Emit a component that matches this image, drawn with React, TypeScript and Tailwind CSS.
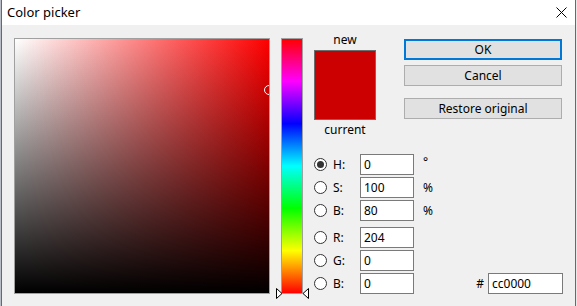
import React from "react";

const font = { fontFamily: '"Noto Sans", "Open Sans", sans-serif' };

type Row = { key: string; label: string; value: string; unit?: string; checked?: boolean };

const hsb: Row[] = [
  { key: "h", label: "H:", value: "0", unit: "°", checked: true },
  { key: "s", label: "S:", value: "100", unit: "%" },
  { key: "v", label: "B:", value: "80", unit: "%" },
];

const rgb: Row[] = [
  { key: "r", label: "R:", value: "204" },
  { key: "g", label: "G:", value: "0" },
  { key: "b", label: "B:", value: "0" },
];

function Radio({ checked }: { checked?: boolean }) {
  return (
    <span className="flex h-[13px] w-[13px] shrink-0 items-center justify-center rounded-full border border-[#333] bg-white">
      {checked ? <span className="h-[7px] w-[7px] rounded-full bg-[#333]" /> : null}
    </span>
  );
}

function Field({ row, last }: { row: Row; last?: boolean }) {
  return (
    <div className="flex h-[21px] items-center">
      <Radio checked={row.checked} />
      <span className="ml-[6px] w-[27px] text-[12px] text-black">{row.label}</span>
      <div className="flex h-[21px] w-[54px] items-center border border-[#7a7a7a] bg-white pl-[3px] text-[12px] text-black">
        {row.value}
      </div>
      {row.unit ? (
        <span className={`ml-[9px] text-[12px] text-black ${row.unit === "°" ? "-mt-[6px]" : ""}`}>
          {row.unit}
        </span>
      ) : null}
      {last ? (
        <>
          <div className="flex-1" />
          <span className="text-[12px] text-black">#</span>
          <div className="ml-[4px] flex h-[21px] w-[75px] items-center border border-[#7a7a7a] bg-white pl-[3px] text-[12px] text-black">
            cc0000
          </div>
        </>
      ) : null}
    </div>
  );
}

function Arrow({ dir }: { dir: "right" | "left" }) {
  return (
    <svg width="7" height="11" viewBox="0 0 7 11">
      <path
        d={dir === "right" ? "M0.5 0.5 L6 5.5 L0.5 10.5 Z" : "M6.5 0.5 L1 5.5 L6.5 10.5 Z"}
        fill="#fff"
        stroke="#000"
        strokeWidth="1"
      />
    </svg>
  );
}

export default function App() {
  return (
    <div className="flex h-[306px] w-[577px] overflow-hidden bg-[#f0f0f0]" style={font}>
      <div className="w-px bg-[#b9bec6]" />
      <div className="flex flex-1 flex-col border-x border-[#1c7bd2]">
        <div className="flex h-[25px] items-center justify-between bg-white pl-[5px] pr-[8px]">
          <span className="text-[13px] text-black">Color picker</span>
          <svg width="11" height="11" viewBox="0 0 11 11">
            <path d="M0.5 0.5 L10.5 10.5 M10.5 0.5 L0.5 10.5" stroke="#000" strokeWidth="1" />
          </svg>
        </div>

        <div className="flex flex-1 bg-[#f0f0f0] pl-[12px] pt-[13px]">
          {/* saturation / brightness square */}
          <div className="relative h-[256px] w-[256px] shrink-0 overflow-hidden border border-[#a0a0a0] bg-[linear-gradient(to_bottom,transparent,#000),linear-gradient(to_right,#fff,#f00)]">
            <span className="absolute left-[249px] top-[46px] h-[10px] w-[10px] rounded-full border border-white" />
          </div>

          {/* hue bar */}
          <div className="relative ml-[11px] h-[256px] w-[22px] shrink-0 border border-[#a0a0a0] bg-[linear-gradient(to_bottom,#f00,#f0f_16.67%,#00f_33.33%,#0ff_50%,#0f0_66.67%,#ff0_83.33%,#f00)]">
            <div className="absolute left-[-6px] top-[249px]">
              <Arrow dir="right" />
            </div>
            <div className="absolute left-[20px] top-[249px]">
              <Arrow dir="left" />
            </div>
          </div>

          {/* right side */}
          <div className="ml-[11px] flex w-[249px] flex-col">
            <div className="flex">
              <div className="flex w-[62px] flex-col">
                <div className="h-[12px] text-center text-[12px] leading-[4px] text-black">new</div>
                <div className="h-[70px] border border-[#6d6d6d] bg-[#cc0000]" />
                <div className="h-[20px] text-center text-[12px] leading-[20px] text-black">current</div>
              </div>
              <div className="ml-[28px] mt-px flex w-[158px] flex-col">
                <button className="h-[21px] border-2 border-[#0078d7] bg-[#e1e1e1] text-[12px] text-black">OK</button>
                <button className="mt-[5px] h-[21px] border border-[#adadad] bg-[#e1e1e1] text-[12px] text-black">Cancel</button>
                <button className="mt-[12px] h-[21px] border border-[#adadad] bg-[#e1e1e1] text-[12px] text-black">
                  Restore original
                </button>
              </div>
            </div>

            <div className="mt-[14px] flex flex-col gap-[2px]">
              {hsb.map((row) => (
                <Field key={row.key} row={row} />
              ))}
            </div>
            <div className="mt-[6px] flex flex-col gap-[2px]">
              {rgb.map((row, i) => (
                <Field key={row.key} row={row} last={i === rgb.length - 1} />
              ))}
            </div>
          </div>
        </div>
      </div>
      <div className="w-px bg-[#e8e8e8]" />
    </div>
  );
}
